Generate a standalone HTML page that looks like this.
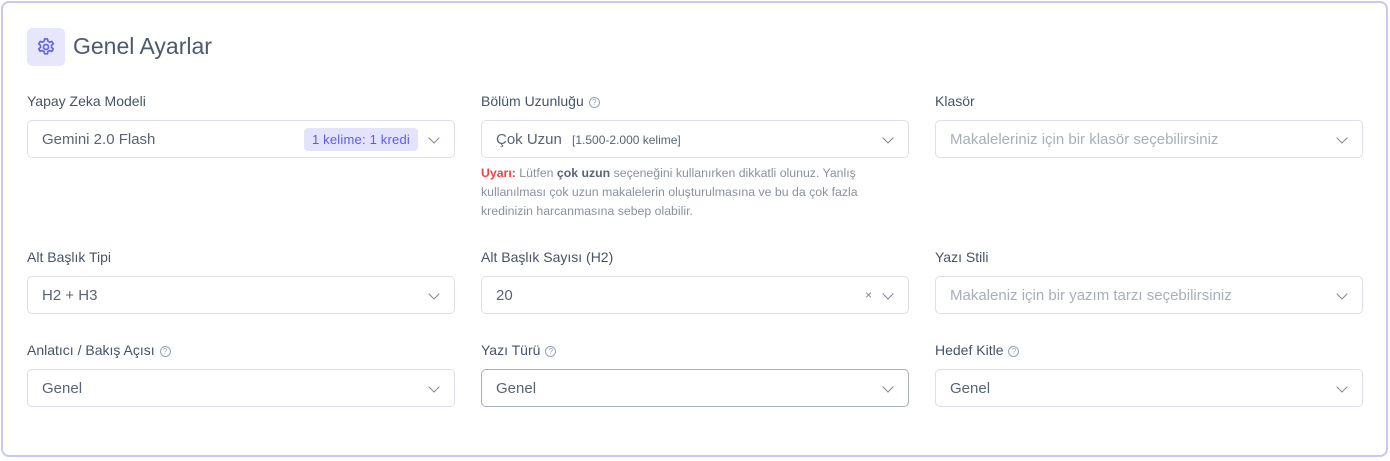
<!DOCTYPE html><html><head><style>
*{box-sizing:border-box;margin:0;padding:0}
body{width:1390px;height:461px;background:#fff;font-family:"Liberation Sans",sans-serif;position:relative;overflow:hidden}
.card{position:absolute;left:1px;top:1px;width:1387px;height:456px;border:2px solid #c9c7f6;border-radius:8px;background:#fff}
.ic{position:absolute;left:27px;top:28px;width:38px;height:38px;border-radius:5px;background:#e6e6fc;display:flex;align-items:center;justify-content:center}
.title{position:absolute;left:73px;top:33px;font-size:23px;color:#4d5a6e}
.lbl{position:absolute;font-size:14px;color:#475467}
.q{display:inline-block;width:11px;height:11px;border:1px solid #98a2b3;border-radius:50%;font-size:8px;line-height:9px;text-align:center;color:#98a2b3;margin-left:5px;vertical-align:1px}
.in{position:absolute;width:428px;height:38px;border:1px solid #dcdfe5;border-radius:5px;font-size:15px;color:#5a6474;padding-left:14px;line-height:37px}
.in.ph{color:#a8afbb}
.chev{position:absolute;right:16px;top:13px;width:8px;height:8px;border-right:1.3px solid #7a8494;border-bottom:1.3px solid #7a8494;transform:rotate(45deg)}
.badge{position:absolute;right:36px;top:7px;height:23px;line-height:23px;padding:0 8px;background:#e4e3fc;color:#5e5ce6;border-radius:4px;font-size:13px;letter-spacing:0.2px}
.warn{position:absolute;left:481px;top:164px;width:418px;font-size:12.3px;line-height:19px;color:#8a919c}
</style></head><body>
<div class="card"></div>
<div class="ic"><svg width="20" height="20" viewBox="0 0 24 24" fill="none" stroke="#6463e8" stroke-width="2" stroke-linejoin="round"><path d="M10.3 2.3h3.4l.6 2.8 2 1.1 2.7-.9 1.7 2.9-2.1 1.9v2.3l2.1 1.9-1.7 2.9-2.7-.9-2 1.1-.6 2.8h-3.4l-.6-2.8-2-1.1-2.7.9-1.7-2.9 2.1-1.9V10.1L3.3 8.2 5 5.3l2.7.9 2-1.1z"/><circle cx="12" cy="12" r="3"/></svg></div>
<div class="title">Genel Ayarlar</div>

<div class="lbl" style="left:27px;top:93px">Yapay Zeka Modeli</div>
<div class="lbl" style="left:481px;top:93px">Bölüm Uzunluğu<span class="q">?</span></div>
<div class="lbl" style="left:935px;top:93px">Klasör</div>
<div class="in" style="left:27px;top:120px">Gemini 2.0 Flash<span class="badge">1 kelime: 1 kredi</span><span class="chev"></span></div>
<div class="in" style="left:481px;top:120px">Çok Uzun <span style="font-size:12px;margin-left:6px">[1.500-2.000 kelime]</span><span class="chev"></span></div>
<div class="in ph" style="left:935px;top:120px">Makaleleriniz için bir klasör seçebilirsiniz<span class="chev"></span></div>
<div class="warn"><b style="color:#f04349">Uyarı:</b> Lütfen <b style="color:#5a6474">çok uzun</b> seçeneğini kullanırken dikkatli olunuz. Yanlış kullanılması çok uzun makalelerin oluşturulmasına ve bu da çok fazla kredinizin harcanmasına sebep olabilir.</div>

<div class="lbl" style="left:27px;top:249px">Alt Başlık Tipi</div>
<div class="lbl" style="left:481px;top:249px">Alt Başlık Sayısı (H2)</div>
<div class="lbl" style="left:935px;top:249px">Yazı Stili</div>
<div class="in" style="left:27px;top:276px">H2 + H3<span class="chev"></span></div>
<div class="in" style="left:481px;top:276px">20<span style="position:absolute;right:36px;font-size:12px;color:#7a8494">×</span><span class="chev"></span></div>
<div class="in ph" style="left:935px;top:276px">Makaleniz için bir yazım tarzı seçebilirsiniz<span class="chev"></span></div>

<div class="lbl" style="left:27px;top:342px">Anlatıcı / Bakış Açısı<span class="q">?</span></div>
<div class="lbl" style="left:481px;top:342px">Yazı Türü<span class="q">?</span></div>
<div class="lbl" style="left:935px;top:342px">Hedef Kitle<span class="q">?</span></div>
<div class="in" style="left:27px;top:369px">Genel<span class="chev"></span></div>
<div class="in" style="left:481px;top:369px;border-color:#a9afb9">Genel<span class="chev"></span></div>
<div class="in" style="left:935px;top:369px">Genel<span class="chev"></span></div>
</body></html>
